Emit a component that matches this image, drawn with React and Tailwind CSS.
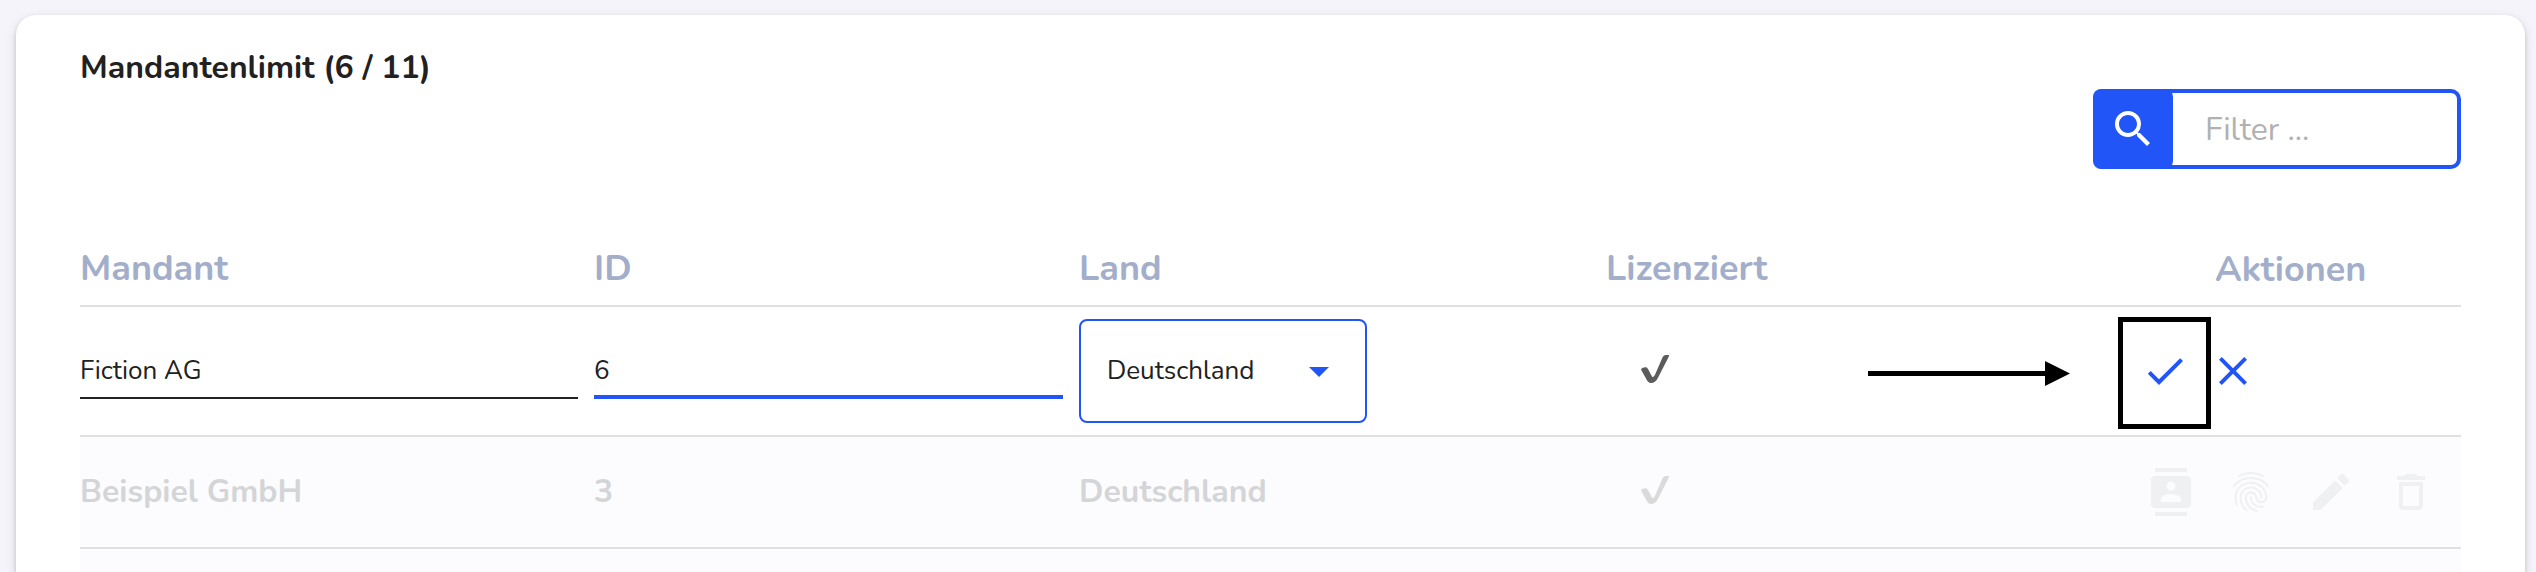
import { MdSearch, MdCheck, MdClose, MdContacts, MdFingerprint, MdEdit, MdDeleteOutline } from "react-icons/md";

const cols = "grid grid-cols-[514px_485px_527px_366px_1fr]";
const head = "text-[36px] leading-[48px] font-bold text-[#a2aeca]";
const muted = "text-[32px] leading-[44px] font-bold text-[#d4d5d6]";

function Tick({ className }) {
  return (
    <svg className={className} width="28" height="28" viewBox="0 0 28 28" fill="currentColor">
      <path d="M0 14.6C.6 12.6 4.6 11.7 5.8 12.6C7.5 14.2 9.5 19 11.3 22C12.6 22.1 13.4 21 14.2 19.3L20.6 4.4C22 1.2 23 0 25 0H27.6C28.2.4 28 1.1 27.6 1.9L17 22.8C15 26.6 13 28 9.8 28C8 27.8 7.2 26.8 6.1 25.4Z" />
    </svg>
  );
}

export default function App() {
  return (
    <div className="h-[572px] overflow-hidden bg-[#f5f4fb] pl-4 pr-[11px] pt-[15px] font-['Nunito','Lato',sans-serif] text-[#212121]">
      <main className="h-[640px] rounded-[20px] bg-white pl-16 pr-16 shadow-[0_4px_12px_rgba(0,0,0,0.12),0_2px_4px_rgba(0,0,0,0.14)]">
        <header className="flex h-[228px] justify-between">
          <h1 className="pt-[31px] text-[32px] leading-[44px] font-bold">Mandantenlimit (6 / 11)</h1>
          <div className="mt-[74px] flex h-20 w-[368px] rounded-[10px] border-4 border-[#2255f8]">
            <div className="-m-1 flex w-20 items-center justify-center rounded-[8px] bg-[#2255f8] text-white">
              <MdSearch size={48} />
            </div>
            <span className="ml-[36px] pt-[15px] text-[32px] leading-[44px] text-[#b1b1b1]">Filter ...</span>
          </div>
        </header>

        <div className={`${cols} ${head} h-16 border-b-2 border-[#e0e0e0] pt-[2px]`}>
          <span>Mandant</span>
          <span>ID</span>
          <span>Land</span>
          <span>Lizenziert</span>
          <span className="pl-[243px] pt-px">Aktionen</span>
        </div>

        <div className={`${cols} h-[130px] border-b-2 border-[#e0e0e0] text-[26px] leading-[36px]`}>
          <div className="mr-4 h-[92px] border-b-2 border-[#212121] pt-[46px]">Fiction AG</div>
          <div className="mr-4 h-[92px] border-b-4 border-[#2255f8] pt-[46px]">6</div>
          <div className="mt-3 flex h-[104px] w-[288px] items-start justify-between rounded-[8px] border-2 border-[#2255f8] pl-[26px] pr-[36px]">
            <span className="pt-[32px]">Deutschland</span>
            <svg className="mt-[46px]" width="20" height="10" viewBox="0 0 20 10">
              <path d="M0 0h20L10 10z" fill="#2255f8" />
            </svg>
          </div>
          <div className="pl-[35px] pt-12">
            <Tick className="text-[#5c5c5c]" />
          </div>
          <div className="flex pt-[10px]">
            <svg className="mt-11 -ml-[104px] shrink-0" width="202" height="25" viewBox="0 0 202 25">
              <path d="M0 10h177V0l25 12.5L177 25V15H0z" />
            </svg>
            <div className="ml-12 flex h-28 w-[93px] shrink-0 justify-center border-[5px] border-black pt-[25px] text-[#2255f8]">
              <MdCheck size={48} />
            </div>
            <MdClose size={48} className="-ml-[2px] mt-[30px] shrink-0 text-[#2255f8]" />
          </div>
        </div>

        <div className={`${cols} ${muted} h-28 border-b-2 border-[#e0e0e0] bg-[#fcfcff]`}>
          <span className="pt-[33px]">Beispiel GmbH</span>
          <span className="pt-[33px]">3</span>
          <span className="pt-[33px]">Deutschland</span>
          <div className="pl-[35px] pt-[39px]">
            <Tick className="text-[#dadada]" />
          </div>
          <div className="flex gap-8 pl-[175px] pt-[31px] text-[#eef0f2]">
            <MdContacts size={48} />
            <MdFingerprint size={48} />
            <MdEdit size={48} />
            <MdDeleteOutline size={48} />
          </div>
        </div>
        <div className="h-24 bg-[#fcfcff]" />
      </main>
    </div>
  );
}
